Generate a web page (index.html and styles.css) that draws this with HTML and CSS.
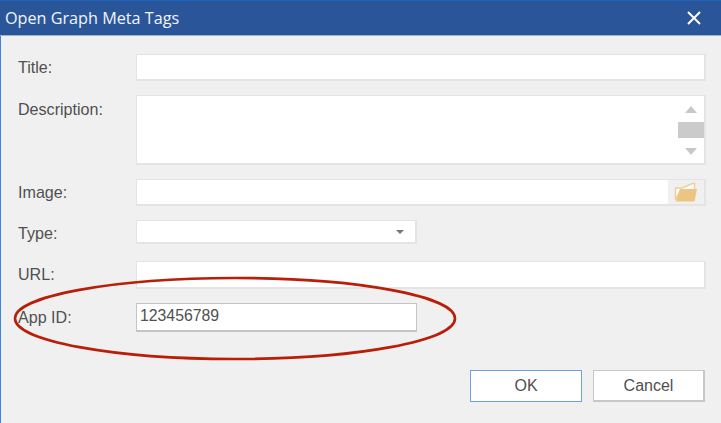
FILE: index.html
```html
<!DOCTYPE html>
<html lang="en">
<head>
<meta charset="utf-8">
<title>Open Graph Meta Tags</title>
<link rel="stylesheet" href="styles.css">
</head>
<body>
<div class="dialog">
  <header class="titlebar">
    <span class="title">Open Graph Meta Tags</span>
    <svg class="close" width="14" height="14" viewBox="0 0 14 14"><path d="M1 1L13 13M13 1L1 13" stroke="#fff" stroke-width="2" fill="none"/></svg>
  </header>
  <main class="form">
    <div class="row row-title">
      <label class="label">Title:</label>
      <div class="field grow"></div>
    </div>
    <div class="row row-desc">
      <label class="label">Description:</label>
      <div class="field grow desc">
        <div class="scroll">
          <span class="arrow up"></span>
          <span class="thumb"></span>
          <span class="arrow down"></span>
        </div>
      </div>
    </div>
    <div class="row row-image">
      <label class="label">Image:</label>
      <div class="field grow image">
        <div class="browse">
          <svg width="24" height="20" viewBox="0 0 24 20">
            <path d="M1.500 18V6H8L18.500 1.500H20.500V9H6z" fill="#fff" stroke="#edcf97" stroke-width="1.500"/>
            <path d="M2 19.500L6 7H23L20.500 19.500z" fill="#ecc583"/>
          </svg>
        </div>
      </div>
    </div>
    <div class="row row-type">
      <label class="label">Type:</label>
      <div class="field short select"><span class="caret"></span></div>
    </div>
    <div class="row row-url">
      <label class="label">URL:</label>
      <div class="field grow"></div>
    </div>
    <div class="row row-app">
      <label class="label">App ID:</label>
      <div class="field short focus">123456789</div>
    </div>
    <div class="buttons">
      <button class="btn primary">OK</button>
      <button class="btn">Cancel</button>
    </div>
  </main>
  <svg class="ring" width="721" height="423" viewBox="0 0 721 423"><ellipse cx="235" cy="318.500" rx="220" ry="40.500" fill="none" stroke="#b81e08" stroke-width="2.600"/></svg>
</div>
</body>
</html>
```
FILE: styles.css
```css
* { box-sizing: border-box; }
html, body { margin: 0; padding: 0; }
body {
  width: 721px;
  height: 423px;
  overflow: hidden;
  background: #f0f0f0;
  font-family: "Liberation Sans", Arial, sans-serif;
  color: #505050;
}
.dialog {
  position: relative;
  width: 721px;
  height: 423px;
  border-left: 1px solid #3d86e0;
}
.titlebar {
  height: 36px;
  margin-left: -1px;
  background: #2a5699;
  border-top: 1px solid #1a64c0;
  border-bottom: 1px solid #9fb2cc;
  display: flex;
  align-items: center;
  justify-content: space-between;
  padding: 0 20px 0 5px;
  color: #f2f5fa;
}
.title { font-family: "Open Sans", sans-serif; font-size: 16.200px; }
.form {
  display: flex;
  flex-direction: column;
  padding: 18px 15px 0 17px;
}
.row { display: flex; }
.label {
  width: 118px;
  flex: none;
  font-size: 16.100px;
  line-height: 18px;
  padding-top: 4px;
}
.field {
  background: #fff;
  border: 2px solid #e4e4e4;
  border-width: 1px 2px 2px 1px;
  position: relative;
}
.grow { flex: 1; }
.short { width: 281px; }
.row-title { height: 27px; margin-bottom: 14px; }
.row-desc { height: 70px; margin-bottom: 14px; }
.row-image { height: 27px; margin-bottom: 14px; }
.row-type { height: 24px; margin-bottom: 17px; }
.row-url { height: 28px; margin-bottom: 14px; }
.row-app { height: 29px; }
.row-desc .label { padding-top: 5px; }
.row-app .label { padding-top: 5px; }
.desc { display: flex; justify-content: flex-end; }
.scroll {
  width: 26px;
  display: flex;
  flex-direction: column;
  align-items: center;
  padding-top: 10px;
}
.arrow { width: 0; height: 0; border-left: 6.500px solid transparent; border-right: 6.500px solid transparent; }
.arrow.up { border-bottom: 7px solid #c8c8c8; }
.arrow.down { border-top: 7px solid #c8c8c8; }
.thumb { width: 26px; height: 16px; background: #cbcbcb; margin: 9px 0 10px; }
.image { display: flex; justify-content: flex-end; }
.browse {
  width: 36px;
  background: #f0f0f0;
  display: flex;
  align-items: center;
  justify-content: center;
}
.select { display: flex; align-items: center; justify-content: flex-end; padding-right: 11px; }
.caret { width: 0; height: 0; border-left: 4px solid transparent; border-right: 4px solid transparent; border-top: 4px solid #777; }
.focus {
  border: 1px solid #c4c4c4;
  border-bottom-width: 2px;
  font-size: 15.800px;
  padding: 2px 3px 0;
  line-height: 20px;
}
.buttons {
  display: flex;
  justify-content: flex-end;
  gap: 11px;
  margin-top: 38px;
  margin-right: 1px;
}
.btn {
  width: 112px;
  height: 32px;
  background: #fff;
  border: 1px solid #c8c8c8;
  border-width: 1px 2px 2px 1px;
  font: 16px "Liberation Sans", Arial, sans-serif;
  color: #505050;
  padding: 0;
}
.btn.primary { border: 1px solid #6aa2e4; }
.ring { position: absolute; left: -1px; top: 0; pointer-events: none; }
```
